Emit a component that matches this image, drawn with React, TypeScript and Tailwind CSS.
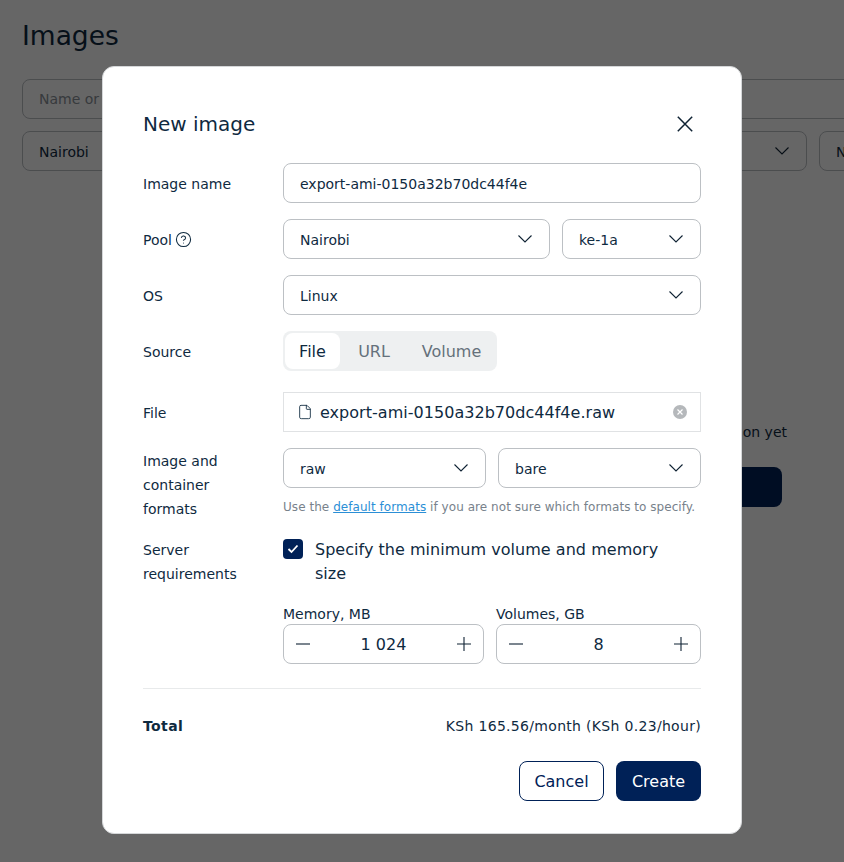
import { CircleHelp, File as FileIcon } from "lucide-react";

const Chevron = () => (
  <svg width="16" height="10" viewBox="0 0 16 10" fill="none" className="shrink-0">
    <path d="M1.5 1.5 L8 8 L14.5 1.5" stroke="#0f2233" strokeWidth="1.1" />
  </svg>
);

const Select = ({ value, className }: { value: string; className: string }) => (
  <div className={`flex h-10 items-center justify-between rounded-lg border border-[#bcc0c4] bg-white pl-4 pr-[16px] text-sm text-[#0f2a3f] ${className}`}>
    <span className="mt-[2px]">{value}</span>
    <Chevron />
  </div>
);

const BgSelect = ({ value, className }: { value: string; className: string }) => (
  <div className={`flex h-10 shrink-0 items-center justify-between rounded-lg border border-[#bcc0c4] pl-4 pr-4 text-sm text-[#0f2a3f] ${className}`}>
    <span className="mt-[2px]">{value}</span>
    <Chevron />
  </div>
);

const Stepper = ({ label, value, className }: { label: string; value: string; className: string }) => (
  <div className={className}>
    <div className="h-[20px] text-sm leading-5 text-[#0f2a3f]">{label}</div>
    <div className="flex h-10 items-center justify-between rounded-lg border border-[#bcc0c4] px-3 text-[#0f2a3f]">
      <svg width="14" height="14" viewBox="0 0 14 14" fill="none"><path d="M0 7 H14" stroke="#0f2233" strokeWidth="1.1" /></svg>
      <span className="mt-[2px] text-base">{value}</span>
      <svg width="14" height="14" viewBox="0 0 14 14" fill="none"><path d="M0 7 H14 M7 0 V14" stroke="#0f2233" strokeWidth="1.1" /></svg>
    </div>
  </div>
);

export default function App() {
  return (
    <div className="relative h-[862px] w-[844px] overflow-hidden bg-white font-['DejaVu_Sans',sans-serif]">
      <div className="px-[22px] pt-[18px] text-[#0f2a3f]">
        <h1 className="text-[26.5px] leading-[36px]">Images</h1>
        <div className="mt-[25px] flex h-10 w-[900px] items-center rounded-lg border border-[#bcc0c4] px-4 text-sm text-[#8a9299]">Name or ID</div>
        <div className="mt-3 flex w-[900px] gap-3">
          <BgSelect value="Nairobi" className="w-[785px]" />
          <BgSelect value="N" className="w-[200px]" />
        </div>
        <div className="mt-[251px] flex w-[760px] flex-col items-end">
          <div className="translate-x-[5px] text-sm leading-5">No images in this region yet</div>
          <div className="mt-[25px] h-10 w-[200px] rounded-lg bg-[#002157]" />
        </div>
      </div>

      <div className="absolute inset-0 bg-black/60" />

      <div className="absolute left-[102px] top-[66px] h-[768px] w-[640px] rounded-xl border border-[#d5d7d9] bg-white px-10 pt-10 text-[#0f2a3f]">
        <div className="flex h-[34px] items-center justify-between pr-2">
          <h2 className="text-[20px] leading-7">New image</h2>
          <svg width="16" height="16" viewBox="0 0 16 16" fill="none" className="-mt-[1px]">
            <path d="M0.8 0.8 L15.2 15.2 M15.2 0.8 L0.8 15.2" stroke="#0f2233" strokeWidth="1.5" />
          </svg>
        </div>

        <div className="mt-[22px] grid grid-cols-[140px_1fr] items-center gap-y-4 text-sm">
          <div className="pt-[2px]">Image name</div>
          <div className="flex h-10 items-center rounded-lg border border-[#bcc0c4] px-4 pt-[2px]">export-ami-0150a32b70dc44f4e</div>

          <div className="flex items-center gap-[3px] pt-[2px]">
            Pool <CircleHelp size={17} strokeWidth={1.5} className="-mt-[1px]" />
          </div>
          <div className="flex gap-3">
            <Select value="Nairobi" className="flex-1" />
            <Select value="ke-1a" className="w-[139px]" />
          </div>

          <div className="pt-[2px]">OS</div>
          <Select value="Linux" className="" />

          <div className="pt-[2px]">Source</div>
          <div className="flex h-10 w-[214px] items-center rounded-lg bg-[#eef0f1] p-0.5 text-base text-[#65717b]">
            <div className="flex h-9 w-[55px] items-center justify-center rounded-lg bg-white pt-[2px] text-[#0f2a3f]">File</div>
            <div className="w-[68px] pt-[2px] text-center">URL</div>
            <div className="w-[87px] pt-[2px] text-center">Volume</div>
          </div>
        </div>

        <div className="mt-[21px] grid grid-cols-[140px_1fr] items-center text-sm">
          <div className="pt-[2px]">File</div>
          <div className="flex h-10 items-center border border-[#e0e2e4] pl-[13px] pr-[13px]">
            <FileIcon size={16} strokeWidth={1.3} className="shrink-0" />
            <span className="ml-[7px] mt-[2px] flex-1 text-base tracking-[0.03px]">export-ami-0150a32b70dc44f4e.raw</span>
            <svg width="14" height="14" viewBox="0 0 14 14" className="shrink-0">
              <circle cx="7" cy="7" r="7" fill="#b5b8bb" />
              <path d="M4.5 4.5 L9.5 9.5 M9.5 4.5 L4.5 9.5" stroke="#fff" strokeWidth="1.2" />
            </svg>
          </div>
        </div>

        <div className="mt-4 grid grid-cols-[140px_1fr] text-sm">
          <div className="pt-px leading-6">Image and<br />container<br />formats</div>
          <div>
            <div className="flex gap-3">
              <Select value="raw" className="flex-1" />
              <Select value="bare" className="flex-1" />
            </div>
            <div className="mt-[11px] text-xs leading-4 tracking-[0.05px] text-[#78828b]">
              Use the <span className="text-[#2b8fd6] underline">default formats</span> if you are not sure which formats to specify.
            </div>
          </div>
        </div>

        <div className="mt-[17px] grid grid-cols-[140px_1fr] text-sm">
          <div className="leading-6">Server<br />requirements</div>
          <div>
            <div className="flex items-start gap-3">
              <div className="mt-[1px] flex size-5 shrink-0 items-center justify-center rounded bg-[#002157]">
                <svg width="12" height="10" viewBox="0 0 12 10" fill="none"><path d="M1.5 5 L4.5 8 L10.5 1.5" stroke="#fff" strokeWidth="1.8" /></svg>
              </div>
              <div className="max-w-[370px] text-base leading-6 tracking-[0.03px]">Specify the minimum volume and memory size</div>
            </div>
            <div className="mt-[18px] flex gap-3">
              <Stepper label="Memory, MB" value="1 024" className="w-[201px]" />
              <Stepper label="Volumes, GB" value="8" className="w-[205px]" />
            </div>
          </div>
        </div>

        <div className="mt-6 border-t border-[#e8eaeb]" />

        <div className="mt-[27px] flex items-center justify-between text-sm leading-5">
          <span className="font-bold tracking-[0.4px]">Total</span>
          <span className="tracking-[0.31px]">KSh 165.56/month (KSh 0.23/hour)</span>
        </div>

        <div className="mt-[25px] flex justify-end gap-3 text-base">
          <div className="flex h-10 w-[85px] items-center justify-center rounded-lg border border-[#002157] pt-[2px] text-[#002157]">Cancel</div>
          <div className="flex h-10 w-[85px] items-center justify-center rounded-lg bg-[#002157] pt-[2px] text-white">Create</div>
        </div>
      </div>
    </div>
  );
}
